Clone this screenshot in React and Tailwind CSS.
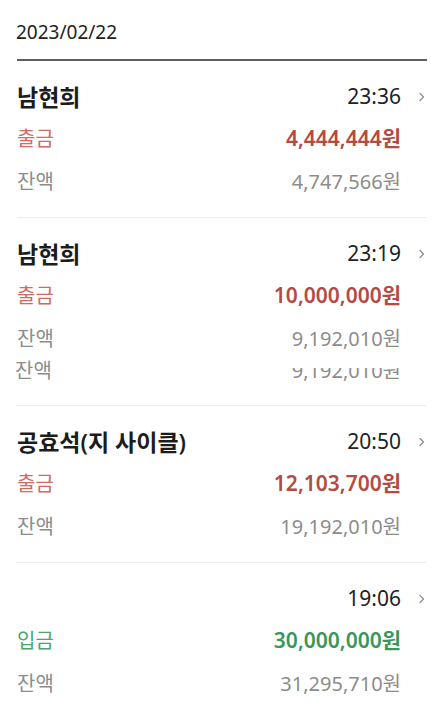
import React from 'react';

const items = [
  { name: '남현희', time: '23:36', type: '출금', amount: '4,444,444원', balance: '4,747,566원' },
  { name: '남현희', time: '23:19', type: '출금', amount: '10,000,000원', balance: '9,192,010원', glitch: true },
  { name: '공효석(지 사이클)', time: '20:50', type: '출금', amount: '12,103,700원', balance: '19,192,010원' },
  { name: '', time: '19:06', type: '입금', amount: '30,000,000원', balance: '31,295,710원' },
];

function Chevron() {
  return (
    <svg width="8" height="10" viewBox="0 0 8 10" className="text-[#8a8a8a]">
      <path d="M2 1.5 L5.5 5 L2 8.5" fill="none" stroke="currentColor" strokeWidth="1.2" strokeLinecap="round" strokeLinejoin="round" />
    </svg>
  );
}

function Row({ item, last }) {
  const deposit = item.type === '입금';
  return (
    <div className={`ml-[17px] mr-[6px] pt-4 pb-[14px] ${last ? '' : 'border-b border-[#ececec]'}`}>
      {/* name + time */}
      <div className="flex items-center justify-between h-[40px]">
        <span className="text-[23px] font-semibold text-[#1c1c1c]">{item.name}</span>
        <div className="flex items-center">
          <span className="text-[21px] text-[#222]">{item.time}</span>
          <span className="w-[25px] flex justify-end">
            <Chevron />
          </span>
        </div>
      </div>
      <div className="flex items-center justify-between h-[43px] pr-[25px]">
        <span className={`text-[20px] ${deposit ? 'text-[#4fa36c]' : 'text-[#cf6b63]'}`}>{item.type}</span>
        <span className={`text-[21px] font-semibold ${deposit ? 'text-[#3b9659]' : 'text-[#b54a42]'}`}>{item.amount}</span>
      </div>
      <div className="flex items-center justify-between h-[43px] pr-[25px]">
        <span className="text-[20px] text-[#8c8c8c]">잔액</span>
        <span className="text-[20px] text-[#8c8c8c]">{item.balance}</span>
      </div>
      {/* repeated, top-clipped balance line as in the capture */}
      {item.glitch && (
        <div className="flex items-start justify-between h-[31px] pr-[25px] -ml-[2px]">
          <span className="text-[20px] leading-[22px] text-[#8c8c8c]">잔액</span>
          <span className="h-[14px] mt-[8px] overflow-hidden flex flex-col justify-end">
            <span className="text-[20px] leading-[22px] text-[#8c8c8c]">{item.balance}</span>
          </span>
        </div>
      )}
    </div>
  );
}

export default function App() {
  return (
    <div className="w-[432px] h-[705px] overflow-hidden bg-white font-['Noto_Sans','Noto_Sans_CJK_KR',sans-serif]">
      <div className="pl-[16px] pt-5 pb-[15px] text-[19px] leading-6 text-[#222]">2023/02/22</div>
      <div className="ml-[17px] mr-[5px] h-[2px] bg-[#5f5f5f]" />
      {items.map((it, i) => (
        <Row key={i} item={it} last={i === items.length - 1} />
      ))}
    </div>
  );
}
